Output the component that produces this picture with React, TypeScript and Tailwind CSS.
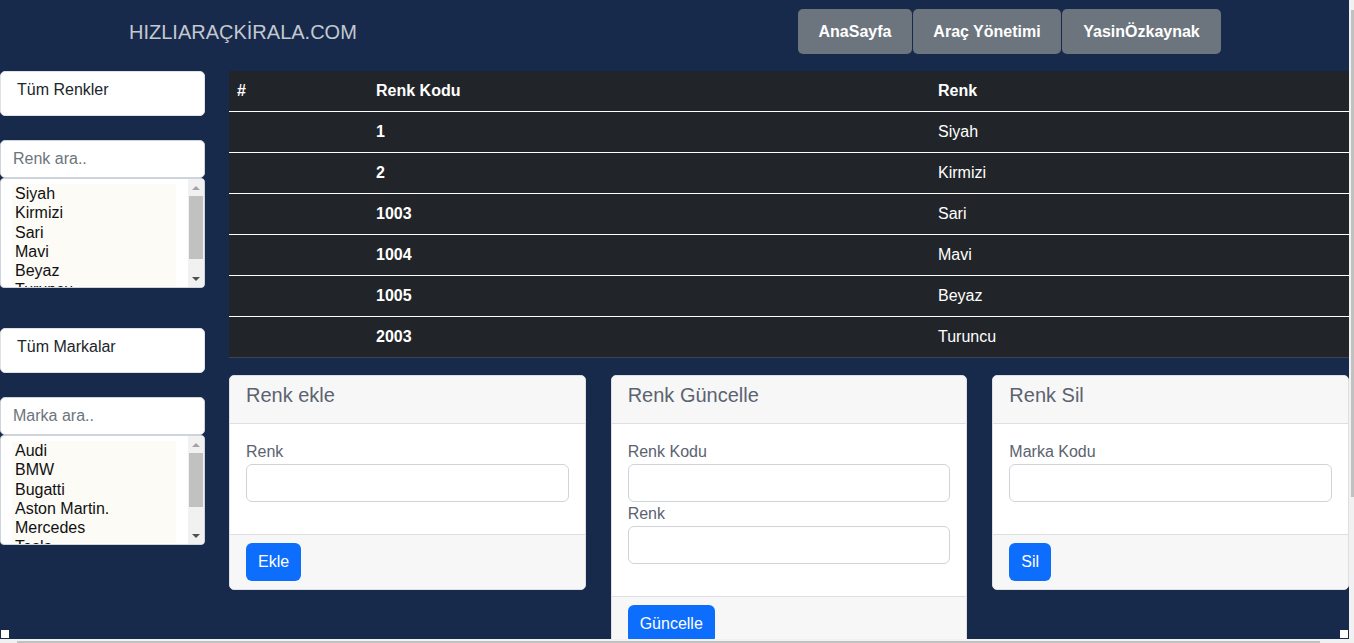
import React from 'react';

const renkler = [
  { kod: 1, ad: 'Siyah' },
  { kod: 2, ad: 'Kirmizi' },
  { kod: 1003, ad: 'Sari' },
  { kod: 1004, ad: 'Mavi' },
  { kod: 1005, ad: 'Beyaz' },
  { kod: 2003, ad: 'Turuncu' },
];

const markalar = ['Audi', 'BMW', 'Bugatti', 'Aston Martin.', 'Mercedes', 'Tesla'];

const menu = [
  { ad: 'AnaSayfa', w: 'w-[114px]' },
  { ad: 'Araç Yönetimi', w: 'w-[148px]' },
  { ad: 'YasinÖzkaynak', w: 'w-[159px]' },
];

// fake native scrollbar for the list boxes
function ListScrollbar({ thumb }: { thumb: number }) {
  return (
    <div className="w-[16px] h-full bg-[#f1f1f1] flex flex-col">
      <div className="h-[17px] flex items-center justify-center">
        <div className="w-0 h-0 border-x-[4px] border-x-transparent border-b-[4px] border-b-[#a3a3a3]" />
      </div>
      <div className="mx-[1px] bg-[#c1c1c1]" style={{ height: thumb }} />
      <div className="flex-1" />
      <div className="h-[17px] flex items-center justify-center">
        <div className="w-0 h-0 border-x-[4px] border-x-transparent border-t-[4px] border-t-[#505050]" />
      </div>
    </div>
  );
}

function SideFilter({ title, placeholder, items, thumb }: { title: string; placeholder: string; items: string[]; thumb: number }) {
  return (
    <div className="flex flex-col">
      <div className="h-[45px] bg-white border border-[#dfe2e6] rounded-[5px] pl-[16px] pt-[6px] leading-[24px] text-[16px] text-[#212529]">
        {title}
      </div>
      <div className="mt-[24px] h-[38px] bg-white border border-[#ced4da] rounded-[5px] px-[12px] flex items-center text-[16px] text-[#6c757d]">
        {placeholder}
      </div>
      <div className="h-[110px] bg-white border border-[#ced4da] rounded-[4px] flex overflow-hidden">
        <div className="flex-1 pl-[11px] pt-[6px] pr-[12px] overflow-hidden">
          <div className="bg-[#fcfbf6] h-full px-[3px] -mt-px text-[16px] leading-[19.3px] text-[#111]">
            {items.map((it) => (
              <div key={it}>{it}</div>
            ))}
          </div>
        </div>
        <ListScrollbar thumb={thumb} />
      </div>
    </div>
  );
}

function Card({ title, fields, button }: { title: string; fields: string[]; button: string }) {
  return (
    <div className="bg-white border border-[#dcdfe3] rounded-[5px] overflow-hidden">
      <div className="bg-[#f7f7f7] border-b border-[#dcdfe3] px-[16px] pt-[7px] pb-[16px]">
        <h5 className="text-[20px] leading-[24px] text-[#5b6370]">{title}</h5>
      </div>
      <div className="p-[16px]">
        {fields.map((f) => (
          <div key={f}>
            <div className="text-[16px] leading-[24px] text-[#5b6370]">{f}</div>
            <div className="h-[38px] border border-[#ced4da] rounded-[6px] bg-white" />
          </div>
        ))}
        <div className="h-[16px]" />
      </div>
      <div className="bg-[#f7f7f7] border-t border-[#dcdfe3] px-[16px] py-[8px]">
        <button className="h-[38px] px-[12px] rounded-[6px] bg-[#0d6efd] text-white text-[16px]">{button}</button>
      </div>
    </div>
  );
}

export default function App() {
  return (
    <div className="w-[1354px] h-[643px] overflow-hidden flex flex-col bg-[#f1f1f1] font-['Liberation_Sans',Arial,sans-serif]">
      <div className="flex flex-1 min-h-0">
        <div className="relative w-[1349px] h-full bg-[#182a4b] overflow-hidden flex flex-col">
          {/* header */}
          <header className="h-[71px] shrink-0 flex items-start">
            <div className="w-[798px] pl-[129px] pt-[20px] text-[20px] leading-[24px] text-[#c3c8d1]">
              HIZLIARAÇKİRALA.COM
            </div>
            <nav className="flex gap-px pt-[9px]">
              {menu.map((n) => (
                <button
                  key={n.ad}
                  className={n.w + ' h-[45px] rounded-[5px] bg-[#6c757d] text-white font-bold text-[16px]'}
                >
                  {n.ad}
                </button>
              ))}
            </nav>
          </header>

          <div className="flex gap-[24px]">
            <aside className="w-[205px] shrink-0 flex flex-col gap-[40px]">
              <SideFilter title="Tüm Renkler" placeholder="Renk ara.." items={renkler.map((r) => r.ad)} thumb={63} />
              <SideFilter title="Tüm Markalar" placeholder="Marka ara.." items={markalar} thumb={54} />
            </aside>

            <main className="flex-1 flex flex-col">
              <div className="bg-[#212529] text-white text-[16px]">
                <div className="h-[41px] flex items-center border-b border-white font-bold">
                  <div className="w-[139px] pl-[8px]">#</div>
                  <div className="w-[562px] pl-[8px]">Renk Kodu</div>
                  <div className="flex-1 pl-[8px]">Renk</div>
                </div>
                {renkler.map((r, i) => (
                  <div
                    key={r.kod}
                    className={
                      'h-[41px] flex items-center border-b ' +
                      (i === renkler.length - 1 ? 'border-[#3f444a]' : 'border-white')
                    }
                  >
                    <div className="w-[139px] pl-[8px]" />
                    <div className="w-[562px] pl-[8px] font-bold">{r.kod}</div>
                    <div className="flex-1 pl-[8px]">{r.ad}</div>
                  </div>
                ))}
              </div>

              <div className="mt-[17px] grid grid-cols-3 gap-[25px] items-start">
                <Card title="Renk ekle" fields={['Renk']} button="Ekle" />
                <Card title="Renk Güncelle" fields={['Renk Kodu', 'Renk']} button="Güncelle" />
                <Card title="Renk Sil" fields={['Marka Kodu']} button="Sil" />
              </div>
            </main>
          </div>

          <div className="absolute left-[1px] bottom-[1px] w-[8px] h-[8px] bg-white" />
          <div className="absolute right-[1px] bottom-[1px] w-[8px] h-[8px] bg-white" />
        </div>
        {/* page vertical scrollbar */}
        <div className="w-[5px] h-full bg-[#f1f1f1] pt-[10px] pl-[2px]">
          <div className="w-[3px] h-[487px] bg-[#c1c1c1]" />
        </div>
      </div>
      {/* page horizontal scrollbar */}
      <div className="h-[4px] shrink-0 bg-[#f1f1f1] pl-[17px] pt-[2px]">
        <div className="w-[1303px] h-[2px] bg-[#c1c1c1]" />
      </div>
    </div>
  );
}
